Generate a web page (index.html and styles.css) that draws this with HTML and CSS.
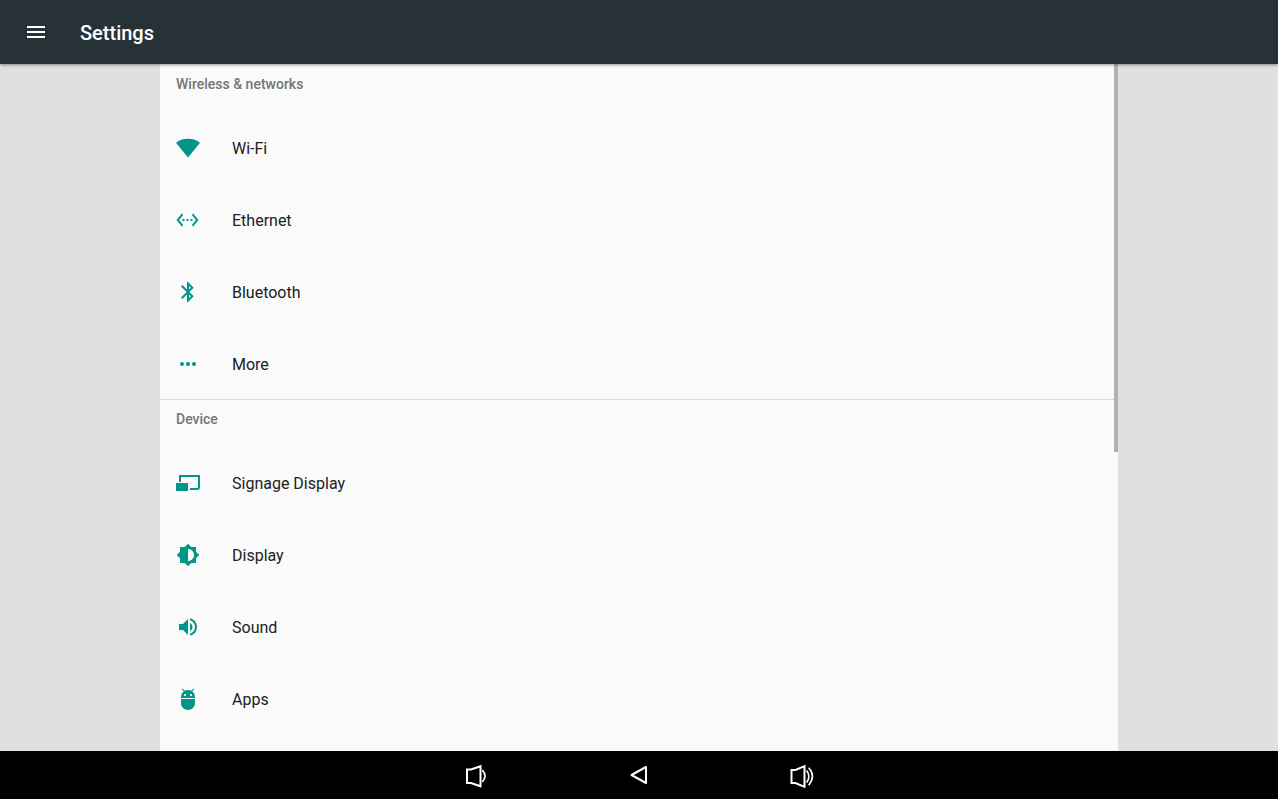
FILE: index.html
```html
<!DOCTYPE html>
<html lang="en">
<head>
    <meta charset="UTF-8">
    <meta name="viewport" content="width=device-width, initial-scale=1.0">
    <title>Settings</title>
    <link rel="stylesheet" href="styles.css">
</head>
<body>
    <header class="toolbar">
        <button class="menu-button" type="button" aria-label="Open menu">
            <svg viewBox="0 0 24 24" width="24" height="24"><path d="M3 18h18v-2H3v2zm0-5h18v-2H3v2zm0-7v2h18V6H3z"/></svg>
        </button>
        <h1>Settings</h1>
    </header>

    <main class="content">
        <div class="dashboard">
            <section class="category">
                <h2>Wireless &amp; networks</h2>
                <a class="tile" href="#wifi">
                    <svg viewBox="0 0 24 24" width="24" height="24"><path d="M12 21.500L24 6.800C21 4 17 2.800 12 2.800S3 4 0 6.800L12 21.500z"/></svg>
                    <span>Wi-Fi</span>
                </a>
                <a class="tile" href="#ethernet">
                    <svg viewBox="0 0 24 24" width="24" height="24"><path d="M7.270 6.760L5.730 5.480.520 12l5.210 6.520 1.540-1.280L3.120 12l4.150-5.240zM6.500 13h2v-2h-2v2zm10-2h-2v2h2v-2zm-6 2h2v-2h-2v2zm6.770-7.520l-1.540 1.280L19.880 12l-4.150 5.240 1.540 1.280L22.480 12l-5.210-6.520z"/></svg>
                    <span>Ethernet</span>
                </a>
                <a class="tile" href="#bluetooth">
                    <svg viewBox="0 0 24 24" width="24" height="24"><path d="M17.710 7.710L12 2h-1v7.590L6.410 5 5 6.410 10.590 12 5 17.590 6.410 19 11 14.410V22h1l5.710-5.710-4.300-4.290 4.300-4.290zM13 5.830l1.880 1.880L13 9.590V5.830zm1.880 10.460L13 18.170v-3.760l1.880 1.880z"/></svg>
                    <span>Bluetooth</span>
                </a>
                <a class="tile" href="#more">
                    <svg viewBox="0 0 24 24" width="24" height="24"><path d="M6 10c-1.100 0-2 .900-2 2s.900 2 2 2 2-.900 2-2-.900-2-2-2zm12 0c-1.100 0-2 .900-2 2s.900 2 2 2 2-.900 2-2-.900-2-2-2zm-6 0c-1.100 0-2 .900-2 2s.900 2 2 2 2-.900 2-2-.900-2-2-2z"/></svg>
                    <span>More</span>
                </a>
            </section>

            <section class="category">
                <h2>Device</h2>
                <a class="tile" href="#signage">
                    <svg viewBox="0 0 24 24" width="24" height="24"><path d="M0 12h12v8H0z"/><path d="M4 11V5h19v11q0 2-2 2h-7" fill="none" stroke="currentColor" stroke-width="2"/></svg>
                    <span>Signage Display</span>
                </a>
                <a class="tile" href="#display">
                    <svg viewBox="0 0 24 24" width="24" height="24"><path d="M20 15.310L23.310 12 20 8.690V4h-4.690L12 .690 8.690 4H4v4.690L.690 12 4 15.310V20h4.690L12 23.310 15.310 20H20v-4.690zM12 18V6c3.310 0 6 2.690 6 6s-2.690 6-6 6z"/></svg>
                    <span>Display</span>
                </a>
                <a class="tile" href="#sound">
                    <svg viewBox="0 0 24 24" width="24" height="24"><path d="M3 9v6h4l5 5V4L7 9H3zm13.500 3c0-1.770-1.020-3.290-2.500-4.030v8.050c1.480-.730 2.500-2.250 2.500-4.020zM14 3.230v2.060c2.890.860 5 3.540 5 6.710s-2.110 5.850-5 6.710v2.060c4.010-.910 7-4.490 7-8.770s-2.990-7.860-7-8.770z"/></svg>
                    <span>Sound</span>
                </a>
                <a class="tile" href="#apps">
                    <svg viewBox="0 0 24 24" width="24" height="24"><path d="M5 16c0 3.870 3.130 7 7 7s7-3.130 7-7v-4H5v4zM16.120 4.370l2.100-2.100-.820-.830-2.300 2.310C14.160 3.280 13.120 3 12 3s-2.160.280-3.090.750L6.600 1.440l-.820.830 2.100 2.100C6.140 5.640 5 7.680 5 10v1h14v-1c0-2.320-1.140-4.360-2.880-5.630zM9 9c-.550 0-1-.450-1-1s.450-1 1-1 1 .450 1 1-.450 1-1 1zm6 0c-.550 0-1-.450-1-1s.450-1 1-1 1 .450 1 1-.450 1-1 1z"/></svg>
                    <span>Apps</span>
                </a>
            </section>
            <div class="scroll-thumb"></div>
        </div>
    </main>

    <nav class="system-bar">
        <button type="button" aria-label="Volume down">
            <svg viewBox="0 0 28 28" width="28" height="28"><path d="M5 8.500h4L18.500 5.200v20.100L9 22H5z" stroke-width="2"/><path d="M20.300 9q5.400 6 0 12" stroke-width="1.700"/></svg>
        </button>
        <button type="button" aria-label="Back">
            <svg viewBox="0 0 28 28" width="28" height="28"><path d="M6.500 14L21 6v16z" stroke-width="2" stroke-linejoin="round"/></svg>
        </button>
        <button type="button" aria-label="Volume up">
            <svg viewBox="0 0 28 28" width="28" height="28"><path d="M3.500 9h4L16.500 5.200v20.600L7.500 22H3.500z" stroke-width="2"/><path d="M18.600 9.500q4.500 6 0 12M20.700 6.700q7.500 8.500 0 17.500" stroke-width="1.600"/></svg>
        </button>
    </nav>
</body>
</html>
```
FILE: styles.css
```css
* {
    box-sizing: border-box;
}
body {
    margin: 0;
    height: 100vh;
    display: flex;
    flex-direction: column;
    overflow: hidden;
    font-family: Roboto, "Liberation Sans", sans-serif;
    background: #e0e0e0;
    color: #212121;
}
button {
    display: flex;
    align-items: center;
    justify-content: center;
    padding: 0;
    border: none;
    background: none;
    cursor: pointer;
}
svg {
    display: block;
    flex: none;
    fill: currentColor;
}

/* top bar */
.toolbar {
    flex: none;
    display: flex;
    align-items: center;
    gap: 20px;
    height: 64px;
    padding: 0 12px;
    background: #263238;
    color: white;
    box-shadow: 0 1px 3px rgba(0, 0, 0, 0.4);
    z-index: 1;
}
.menu-button {
    width: 48px;
    height: 48px;
    color: white;
}
.toolbar h1 {
    margin: 0;
    padding-top: 2px;
    font-size: 20px;
    font-weight: 500;
    line-height: 24px;
}

/* settings list */
.content {
    flex: 1;
    min-height: 0;
    display: flex;
    padding: 0 160px;
}
.dashboard {
    position: relative;
    flex: 1;
    overflow: hidden;
    background: #fafafa;
}
.category + .category {
    margin-top: -1px;
    box-shadow: inset 0 1px 0 #d9d9d9;
}
.category h2 {
    margin: 0;
    height: 48px;
    padding: 0 16px;
    font-size: 14px;
    font-weight: 500;
    line-height: 40px;
    color: #757575;
}
.tile {
    display: flex;
    align-items: center;
    gap: 32px;
    height: 72px;
    padding: 0 16px;
    font-size: 16px;
    line-height: 24px;
    color: inherit;
    text-decoration: none;
}
.tile span {
    padding-top: 2px;
}
.tile svg {
    color: #009688;
}
.scroll-thumb {
    position: absolute;
    top: 0;
    right: 0;
    width: 4px;
    height: 56.5%;
    background: #b2b2b2;
}

/* navigation bar */
.system-bar {
    flex: none;
    display: flex;
    align-items: center;
    justify-content: center;
    gap: 115px;
    height: 48px;
    background: black;
}
.system-bar button {
    width: 48px;
    height: 48px;
    color: white;
}
.system-bar svg {
    fill: none;
    stroke: currentColor;
}
```
